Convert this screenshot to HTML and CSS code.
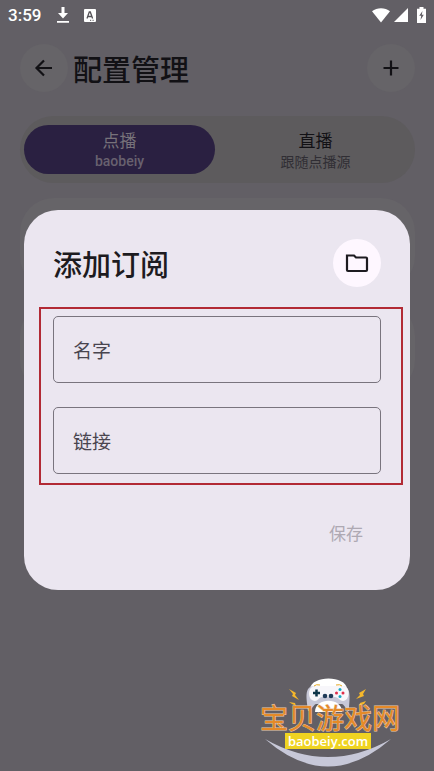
FILE: index.html
```html
<!DOCTYPE html>
<html lang="zh-CN">
<head>
<meta charset="utf-8">
<meta name="viewport" content="width=device-width, initial-scale=1">
<title>配置管理</title>
<link rel="stylesheet" href="styles.css">
</head>
<body>
<div class="statusbar">
  <span class="clock">3:59</span>
  <svg width="12" height="16" viewBox="0 0 12 16" fill="#fff"><path d="M4.500 0h3v6H11l-5 5.500L1 6h3.500zM0 14h12v1.800H0z"/></svg>
  <svg class="app" width="12" height="13" viewBox="0 0 12 13"><rect width="12" height="13" rx="1" fill="#fff"/><path d="M3 9.500L5.300 3h1L8.600 9.500M4 7.500h3.600" fill="none" stroke="#555358" stroke-width="1.300"/><path d="M6 11.300h1.200M8.500 11.300h1.200" stroke="#555358"/></svg>
  <span class="spacer"></span>
  <svg width="18" height="15" viewBox="0 0 18 15" fill="#fff"><path d="M0 3.300C5-.8 13-.8 18 3.300L9 14.500z"/></svg>
  <svg class="signal" width="14" height="14" viewBox="0 0 14 14" fill="#fff"><path d="M14 0v14H0z"/></svg>
  <svg class="battery" width="9" height="16" viewBox="0 0 9 16"><path d="M2.500 0h4v1.700H9V16H0V1.700h2.500z" fill="#fff"/><path d="M5.500 4L2.200 8.700h2L3.500 13l3.300-5.200h-2z" fill="#625f65"/></svg>
</div>

<header class="topbar">
  <button class="round" type="button" aria-label="返回">
    <svg width="24" height="24" viewBox="0 0 24 24"><path d="M20 12H4.500M12 4.500L4.500 12l7.500 7.500"/></svg>
  </button>
  <h1>配置管理</h1>
  <button class="round" type="button" aria-label="添加">
    <svg width="24" height="24" viewBox="0 0 24 24"><path d="M12 4.500v15M4.500 12h15"/></svg>
  </button>
</header>

<main>
  <nav class="tabs">
    <button class="tab active" type="button"><span>点播</span><small>baobeiy</small></button>
    <button class="tab" type="button"><span>直播</span><small>跟随点播源</small></button>
  </nav>
  <div class="card"></div>
  <div class="card"></div>
</main>

<div class="overlay">
  <form class="dialog" role="dialog" aria-labelledby="dialog-title">
    <div class="dialog-head">
      <h2 id="dialog-title">添加订阅</h2>
      <button class="round light" type="button" aria-label="文件夹">
        <svg width="24" height="24" viewBox="0 0 24 24"><path d="M2 4.500h7l2 2h10a1 1 0 0 1 1 1V19a1 1 0 0 1-1 1H3a1 1 0 0 1-1-1z"/></svg>
      </button>
    </div>
    <div class="fields">
      <div class="field"><label for="name">名字</label><input id="name" type="text"></div>
      <div class="field"><label for="link">链接</label><input id="link" type="text"></div>
    </div>
    <div class="actions"><button class="save" type="submit" disabled>保存</button></div>
  </form>
</div>

<svg class="watermark" width="140" height="92" viewBox="0 0 140 92">
  <path d="M5 63Q68 118 131 63Q68 99 5 63z" fill="#c7c8d8"/>
  <!-- gamepad -->
  <path d="M50 13C51-1 86-1 87 13z" fill="#fff"/>
  <path d="M55 10C43 10 47 24 48 35c4-1 5-6 8-7h26c3 1 4 6 7 7 0-11 4-25-8-25z" fill="#c7c8d8"/>
  <path d="M55 10h28c8 0 7 15 0 15-3 0-5-4-8-4H62c-3 0-4 4-7 4-8 0-8-15 0-15z" fill="#f7f6fa"/>
  <path d="M55 36c0-15 27-15 27 0z" fill="#fff"/>
  <path d="M53 17h7M56.500 13.500v7" stroke="#0d3448" stroke-width="2.500"/>
  <circle cx="65" cy="20" r="2.300" fill="#203b59"/><circle cx="71" cy="20" r="2.300" fill="#203b59"/>
  <circle cx="80" cy="13.500" r="1.500" fill="#16a9c4"/><circle cx="76.500" cy="17" r="1.500" fill="#e02d4a"/><circle cx="83" cy="17" r="1.500" fill="#e02d4a"/><circle cx="80" cy="20.500" r="1.500" fill="#16a9c4"/>
  <path d="M54 10q2-2 6-1M76 9q4-1 6 1" fill="none" stroke="#e4a71f"/>
  <path d="M29 13l7 4-1 2 4 5-7-4 1-2zM106 13l-7 4 1 2-4 4 8-3-1-2zM29 26l6 1 1 3-4-2zM106 25l-6 2-1 3 5-2z" fill="#f5b72b"/>
  <path d="M25 57h86v16H25z" fill="#efd321"/>
  <text class="brand" x="0" y="53">宝贝游戏网</text>
  <text class="site" x="68" y="70" text-anchor="middle">baobeiy.com</text>
</svg>
</body>
</html>
```

FILE: styles.css
```css
* {
  box-sizing: border-box;
}

body {
  margin: 0;
  min-height: 100vh;
  background: #625f65;
  color: #121115;
  font-family: "Noto Sans CJK SC", sans-serif;
}

button, input {
  font-family: inherit;
  color: inherit;
  border: 0;
  padding: 0;
}

h1, h2 {
  margin: 0;
  flex: 1;
  font-size: 29px;
  line-height: 40px;
  font-weight: 500;
}

/* status bar */
.statusbar {
  display: flex;
  align-items: center;
  height: 30px;
  padding: 0 8px;
  color: #fff;
}

.clock {
  font-family: Roboto, sans-serif;
  font-size: 17px;
  line-height: 20px;
  font-weight: 500;
  margin-right: 16px;
}

.app {
  margin-left: 15px;
}

.spacer {
  flex: 1;
}

.signal {
  margin: 0 9px 0 4px;
}

/* header */
.topbar {
  display: flex;
  align-items: center;
  gap: 5px;
  padding: 14px 19px 24px 20px;
}

.round {
  display: flex;
  align-items: center;
  justify-content: center;
  flex: none;
  width: 48px;
  height: 48px;
  border-radius: 50%;
  background: #666468;
}

.round svg {
  fill: none;
  stroke: currentColor;
  stroke-width: 2.2;
}

.round.light {
  background: #fef7ff;
  color: #1d1b20;
}

/* page */
main {
  padding: 0 19px 0 20px;
}

.tabs {
  display: grid;
  grid-template-columns: 1fr 1fr;
  gap: 5px;
  padding: 9px 4px;
  margin-bottom: 15px;
  border-radius: 34px;
  background: #5d5b5d;
}

.tab {
  display: flex;
  flex-direction: column;
  align-items: center;
  justify-content: center;
  height: 49px;
  border-radius: 25px;
  background: transparent;
  font-size: 17px;
  line-height: 22px;
}

.tab small {
  font-size: 14px;
  line-height: 20px;
  color: #302e34;
}

.tab.active {
  background: #2a2041;
  color: #77727a;
}

.tab.active small {
  font-family: Roboto, sans-serif;
  color: #68616f;
  font-weight: 500;
}

.card {
  height: 92px;
  margin-bottom: 12px;
  border-radius: 34px;
  background: #666468;
}

/* dialog */
.overlay {
  position: absolute;
  inset: 0;
  display: flex;
  align-items: center;
  padding: 29px 24px 0;
}

.dialog {
  width: 100%;
  padding: 29px 7px 33px 15px;
  border-radius: 34px;
  background: #ebe6f0;
  color: #1d1b20;
}

.dialog-head {
  display: flex;
  align-items: center;
  padding: 0 22px 20px 14px;
}

.fields {
  display: flex;
  flex-direction: column;
  gap: 24px;
  padding: 7px 20px 9px 12px;
  border: 2px solid #b22a35;
}

.field {
  display: flex;
  align-items: center;
  height: 67px;
  padding: 0 19px;
  border: 1px solid #79747e;
  border-radius: 5px;
}

.field label {
  font-size: 19px;
  line-height: 28px;
  color: #49454f;
}

.field input {
  flex: 1;
  min-width: 0;
  height: 48px;
  margin-left: 8px;
  background: transparent;
  font-size: 19px;
  outline: 0;
}

.actions {
  display: flex;
  justify-content: flex-end;
  padding: 23px 22px 0 0;
}

.save {
  height: 49px;
  padding: 0 18px;
  background: transparent;
  font-size: 17px;
  line-height: 22px;
  color: #aea9b3;
}

/* watermark */
.watermark {
  position: absolute;
  right: 34px;
  bottom: 3px;
}

.brand {
  font-size: 28px;
  font-weight: 400;
  fill: #e58a28;
  stroke: #e9c9a8;
  stroke-width: 1px;
  paint-order: stroke;
}

.site {
  font-family: "Open Sans", sans-serif;
  font-size: 13px;
  font-weight: 600;
  fill: #fff;
}
```
